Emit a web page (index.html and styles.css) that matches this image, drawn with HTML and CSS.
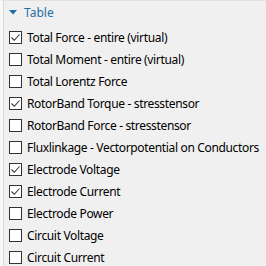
FILE: index.html
```html
<!DOCTYPE html>
<html>
<head>
<meta charset="utf-8">
<link rel="stylesheet" href="styles.css">
</head>
<body>
<div class="panel">
  <div class="header">
    <svg class="caret" width="8" height="5" viewBox="0 0 8 5"><path d="M0 0H8L4 4.5Z" fill="#1e6ea6"/></svg>
    <span class="title">Table</span>
  </div>
  <ul class="list">
    <li class="row"><span class="box checked"></span><span class="label">Total Force - entire (virtual)</span></li>
    <li class="row"><span class="box"></span><span class="label">Total Moment - entire (virtual)</span></li>
    <li class="row"><span class="box"></span><span class="label">Total Lorentz Force</span></li>
    <li class="row"><span class="box checked"></span><span class="label">RotorBand Torque - stresstensor</span></li>
    <li class="row"><span class="box"></span><span class="label">RotorBand Force - stresstensor</span></li>
    <li class="row"><span class="box"></span><span class="label">Fluxlinkage - Vectorpotential on Conductors</span></li>
    <li class="row"><span class="box checked"></span><span class="label">Electrode Voltage</span></li>
    <li class="row"><span class="box checked"></span><span class="label">Electrode Current</span></li>
    <li class="row"><span class="box"></span><span class="label">Electrode Power</span></li>
    <li class="row"><span class="box"></span><span class="label">Circuit Voltage</span></li>
    <li class="row"><span class="box"></span><span class="label">Circuit Current</span></li>
  </ul>
</div>
</body>
</html>
```
FILE: styles.css
```css
html, body {
  margin: 0;
  padding: 0;
  background: #f0f0f0;
  overflow: hidden;
}
.panel {
  width: 266px;
  height: 266px;
  box-sizing: border-box;
  border-top: 1px solid #e2e2e2;
  border-left: 3px solid #f8f8f8;
  box-shadow: inset 1px 0 0 #dadada;
  font-family: "Noto Sans", sans-serif;
  font-size: 12px;
  color: #000;
}
.header {
  display: flex;
  align-items: center;
  height: 22px;
  padding-left: 6px;
}
.caret {
  display: block;
  margin-right: 7px;
}
.title {
  color: #1e6ea6;
  font-size: 12px;
}
.list {
  list-style: none;
  margin: 3px 0 0 0;
  padding: 0 0 0 6px;
}
.row {
  display: flex;
  align-items: center;
  height: 22px;
}
.box {
  width: 13px;
  height: 13px;
  box-sizing: border-box;
  border: 1px solid #333;
  background: #fff;
  margin-right: 5px;
  flex: none;
  position: relative;
}
.box.checked::after {
  content: "";
  position: absolute;
  left: 1px;
  top: 1px;
  width: 9px;
  height: 9px;
  background: no-repeat center/9px 9px url("data:image/svg+xml,%3Csvg xmlns='http://www.w3.org/2000/svg' viewBox='0 0 9 9'%3E%3Cpath d='M0.5 4.5L3.3 7.3L8.5 1.5' fill='none' stroke='%23333' stroke-width='1.1'/%3E%3C/svg%3E");
}
.label {
  white-space: nowrap;
  letter-spacing: -0.34px;
}
```
